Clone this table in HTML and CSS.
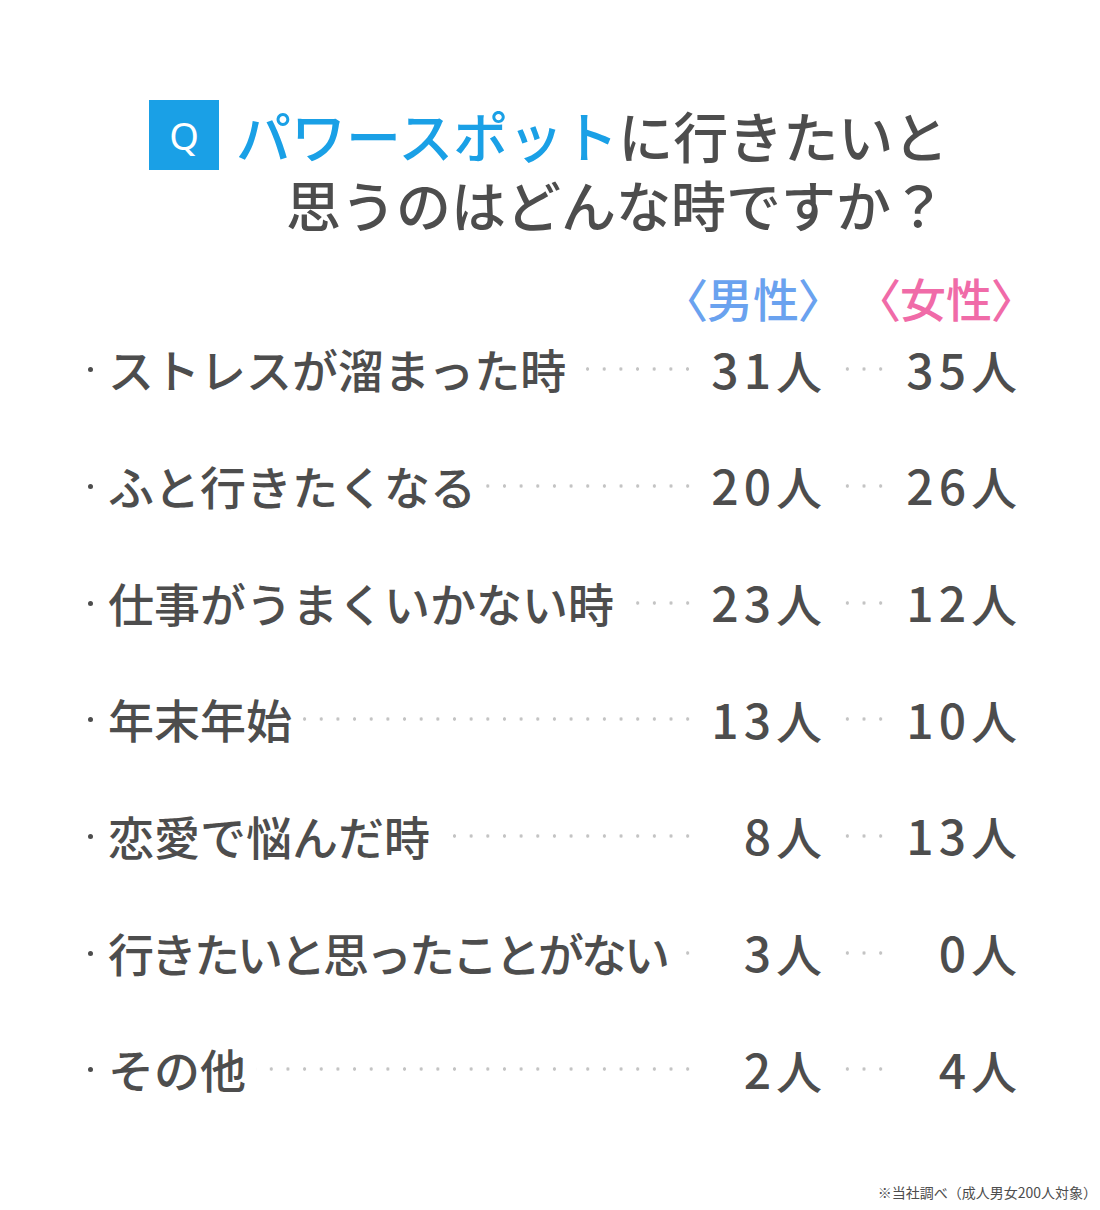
FILE: index.html
```html
<!DOCTYPE html>
<html lang="ja">
<head>
<meta charset="utf-8">
<title>パワースポットに行きたいと思うのはどんな時ですか？</title>
<link rel="stylesheet" href="styles.css">
</head>
<body>
<main class="page">
  <header class="title">
    <div class="q-box">Q</div>
    <h1 class="question"><span class="line line-1"><span class="accent">パワースポット</span>に行きたいと</span><span class="line line-2">思うのはどんな時ですか？</span></h1>
  </header>

  <section class="table">
    <div class="head">
      <div class="m"><span class="sex male">〈男性〉</span></div>
      <div class="lead2 blank"></div>
      <div class="f"><span class="sex female">〈女性〉</span></div>
    </div>

    <div class="row">
      <div class="item"><div class="label">ストレスが溜まった時</div><div class="lead"></div></div>
      <div class="m"><span class="num">31</span>人</div>
      <div class="lead2"></div>
      <div class="f"><span class="num">35</span>人</div>
    </div>
    <div class="row">
      <div class="item"><div class="label">ふと行きたくなる</div><div class="lead"></div></div>
      <div class="m"><span class="num">20</span>人</div>
      <div class="lead2"></div>
      <div class="f"><span class="num">26</span>人</div>
    </div>
    <div class="row">
      <div class="item"><div class="label">仕事がうまくいかない時</div><div class="lead"></div></div>
      <div class="m"><span class="num">23</span>人</div>
      <div class="lead2"></div>
      <div class="f"><span class="num">12</span>人</div>
    </div>
    <div class="row">
      <div class="item"><div class="label">年末年始</div><div class="lead"></div></div>
      <div class="m"><span class="num">13</span>人</div>
      <div class="lead2"></div>
      <div class="f"><span class="num">10</span>人</div>
    </div>
    <div class="row">
      <div class="item"><div class="label">恋愛で悩んだ時</div><div class="lead"></div></div>
      <div class="m"><span class="num">8</span>人</div>
      <div class="lead2"></div>
      <div class="f"><span class="num">13</span>人</div>
    </div>
    <div class="row">
      <div class="item"><div class="label tight">行きたいと思ったことがない</div><div class="lead"></div></div>
      <div class="m"><span class="num">3</span>人</div>
      <div class="lead2"></div>
      <div class="f"><span class="num">0</span>人</div>
    </div>
    <div class="row">
      <div class="item"><div class="label">その他</div><div class="lead"></div></div>
      <div class="m"><span class="num">2</span>人</div>
      <div class="lead2"></div>
      <div class="f"><span class="num">4</span>人</div>
    </div>
  </section>

  <p class="note">※当社調べ（成人男女200人対象）</p>
</main>
</body>
</html>
```

FILE: styles.css
```css
* {
  box-sizing: border-box;
}

html,
body {
  margin: 0;
  padding: 0;
  background: #ffffff;
}

body {
  font-family: "Noto Sans CJK JP", "Noto Sans", sans-serif;
  color: #4d4d4d;
}

.page {
  width: 1100px;
  min-height: 1210px;
  padding-top: 100px;
}

/* ---------- title ---------- */
.title {
  display: flex;
  align-items: flex-start;
  padding-left: 149px;
}

.q-box {
  width: 70px;
  height: 70px;
  flex: none;
  background: #1aa0e6;
  color: #ffffff;
  font-family: "Noto Sans", "Liberation Sans", sans-serif;
  font-size: 38px;
  line-height: 70px;
  text-align: center;
}

.question {
  margin: 0 0 0 17px;
  font-size: 55px;
  font-weight: 500;
  line-height: 69px;
  color: #4d4d4d;
  white-space: nowrap;
}

.line {
  display: block;
}

.line-2 {
  padding-left: 50px;
}

.accent {
  color: #1aa0e6;
}

/* ---------- table ---------- */
.table {
  margin: 46px 0 0 80px;
  width: 937px;
  font-size: 46px;
  font-weight: 500;
}

.head,
.row {
  display: grid;
  grid-template-columns: minmax(0, 1fr) 126px 67px 128px;
  align-items: center;
}

.head {
  line-height: 26px;
}

.head > .m {
  grid-column-start: 2;
}

.head > .m,
.head > .f {
  display: flex;
  justify-content: flex-end;
}

.sex {
  flex: none;
  white-space: nowrap;
  font-feature-settings: "palt";
}

.male {
  color: #6aa2ef;
}

.female {
  color: #f06ba8;
  margin-right: 2px;
}

.row {
  height: 116.67px;
  line-height: 60px;
}

.item {
  display: flex;
  align-items: center;
  min-width: 0;
}

.label {
  display: flex;
  align-items: center;
  flex: none;
  white-space: nowrap;
}

.label.tight {
  letter-spacing: -3px;
}

.label::before {
  content: "";
  width: 5px;
  height: 5px;
  border-radius: 50%;
  background: #4d4d4d;
  margin: 3px 15px 0 8px;
  flex: none;
}

.lead,
.lead2 {
  height: 8px;
  margin-top: 2px;
  background-image: radial-gradient(circle, #c4c4c4 1.4px, rgba(196, 196, 196, 0) 2px);
  background-size: 16.67px 8px;
  background-repeat: repeat-x;
  background-position: right center;
}

.lead {
  flex: 1;
  min-width: 0;
  margin-left: 10px;
}

.lead2 {
  width: 50px;
  margin-left: 17px;
}

.lead2.blank {
  background: none;
}

.m,
.f {
  text-align: right;
  white-space: nowrap;
}

.num {
  font-size: 48px;
  letter-spacing: 5px;
}

/* ---------- note ---------- */
.note {
  margin: 55px 0 0 0;
  padding-right: 3px;
  font-size: 14px;
  line-height: 20px;
  text-align: right;
  color: #4d4d4d;
}
```
